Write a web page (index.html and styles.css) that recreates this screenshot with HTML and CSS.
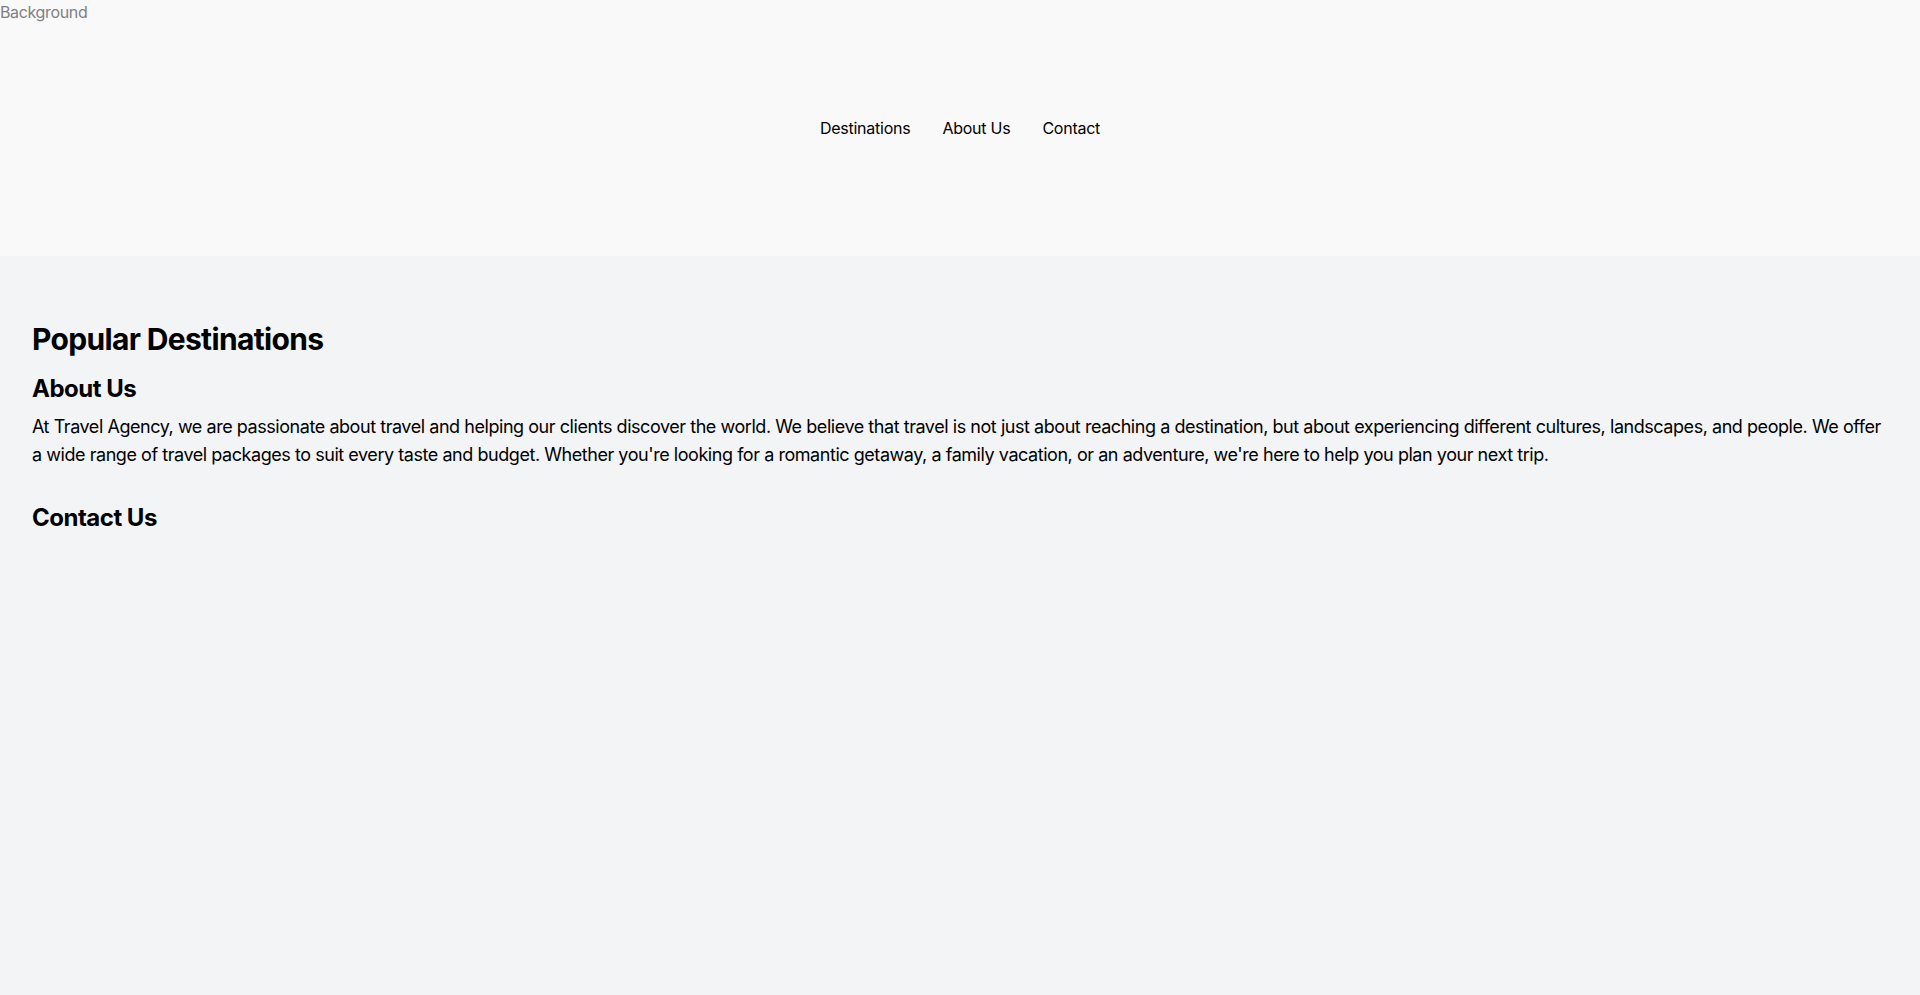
FILE: index.html
```html
<!DOCTYPE html>
<html lang="en">
<head>
<meta charset="utf-8">
<title>Travel Agency</title>
<link rel="stylesheet" href="styles.css">
</head>
<body>
<div class="page">
  <header class="site-header">
    <span class="bg-label">Background</span>
    <nav class="nav">
      <a class="nav-link" href="#destinations">Destinations</a>
      <a class="nav-link" href="#about">About Us</a>
      <a class="nav-link" href="#contact">Contact</a>
    </nav>
  </header>
  <main class="main">
    <section class="section" id="destinations">
      <h2 class="title">Popular Destinations</h2>
    </section>
    <section class="section about" id="about">
      <h3 class="subtitle">About Us</h3>
      <p class="text">At Travel Agency, we are passionate about travel and helping our clients discover the world. We believe that travel is not just about reaching a destination, but about experiencing different cultures, landscapes, and people. We offer a wide range of travel packages to suit every taste and budget. Whether you're looking for a romantic getaway, a family vacation, or an adventure, we're here to help you plan your next trip.</p>
    </section>
    <section class="section" id="contact">
      <h3 class="subtitle">Contact Us</h3>
    </section>
  </main>
</div>
</body>
</html>
```

FILE: styles.css
```css
* { box-sizing: border-box; }
html, body { margin: 0; padding: 0; }
body {
  font-family: Inter, "Noto Sans", "Liberation Sans", sans-serif;
  color: #000;
  background: #f3f4f6;
}
.page {
  min-height: 995px;
  display: flex;
  flex-direction: column;
}
.site-header {
  position: relative;
  height: 256px;
  background: #f9f9f9;
  display: flex;
  align-items: center;
  justify-content: center;
}
.bg-label {
  position: absolute;
  left: 0;
  top: 0;
  font-size: 16px;
  line-height: 24px;
  letter-spacing: -0.35px;
  color: #808080;
}
.nav {
  display: flex;
}
.nav-link {
  padding: 0 16px;
  font-size: 16px;
  line-height: 24px;
  letter-spacing: -0.25px;
  color: #000;
  text-decoration: none;
}
.main {
  flex: 1;
  background: #f3f4f6;
  padding: 65px 32px 64px;
}
.section { margin: 0; }
.title {
  margin: 0 0 16px;
  font-size: 30px;
  line-height: 36px;
  font-weight: 700;
  letter-spacing: -0.66px;
}
.subtitle {
  margin: 0 0 8px;
  font-size: 24px;
  line-height: 32px;
  font-weight: 700;
  letter-spacing: -0.5px;
}
.text {
  margin: 0;
  font-size: 18px;
  line-height: 28px;
  letter-spacing: -0.45px;
}
.about { margin-bottom: 33px; }
```
